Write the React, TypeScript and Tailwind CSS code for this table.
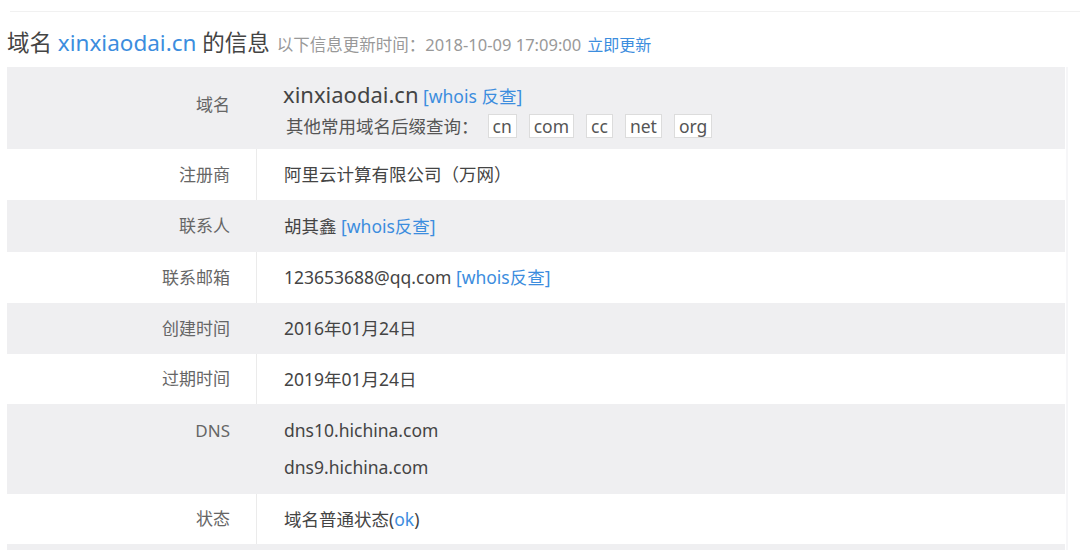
const font = { fontFamily: '"Noto Sans", "Noto Sans CJK SC", sans-serif' };

const suffixes = ['cn', 'com', 'cc', 'net', 'org'];

function Row({
  label,
  gray,
  children,
  top,
}: {
  label: string;
  gray?: boolean;
  children: React.ReactNode;
  top?: boolean;
}) {
  return (
    <div className={`flex ${gray ? 'bg-[#efeff1]' : 'bg-white'}`}>
      <div
        className={`w-[249px] shrink-0 text-right pr-[26px] text-[17px] text-[#666] flex justify-end ${
          top ? 'items-start pt-[8px] leading-[37px]' : 'items-center'
        }`}
      >
        {label}
      </div>
      <div
        className={`flex-1 pl-[27px] border-l ${
          gray ? 'border-[#efeff1]' : 'border-[#ebebeb]'
        }`}
      >
        {children}
      </div>
    </div>
  );
}

export default function App() {
  return (
    <div className="w-[1080px] h-[550px] bg-white overflow-hidden" style={font}>
      {/* top rule */}
      <div className="h-[12px] ml-[10px] border-b border-[#f1f1f1]" />

      {/* heading */}
      <div className="flex items-baseline pl-[7px] pt-[16px] h-[55px]">
        <span className="text-[22.5px] leading-[30px] text-[#444]">
          域名 <span className="text-[#3c8dde]">xinxiaodai.cn</span> 的信息
        </span>
        <span className="ml-[7px] text-[16.5px] text-[#999]">
          以下信息更新时间：2018-10-09 17:09:00
        </span>
        <span className="ml-[6px] text-[16px] text-[#3c8dde]">立即更新</span>
      </div>

      {/* info table */}
      <div className="flex">
        <div className="ml-[7px] w-[1058px] text-[17.5px] text-[#444]">
          <div className="flex bg-[#efeff1] h-[82px]">
            <div className="w-[249px] shrink-0 pr-[26px] pt-[25px] text-right text-[17px] text-[#666]">
              域名
            </div>
            <div className="flex-1 pl-[27px] pt-[12px]">
              <div className="leading-[30px]">
                <span className="text-[22px] text-[#444]">xinxiaodai.cn</span>{' '}
                <span className="text-[17.5px] text-[#3c8dde]">[whois 反查]</span>
              </div>
              <div className="flex items-center mt-[2px] pl-[3px]">
                <span className="text-[#555]">其他常用域名后缀查询：</span>
                <div className="flex gap-[12px] ml-[9px]">
                  {suffixes.map((s) => (
                    <span
                      key={s}
                      className="bg-white border border-[#dcdcdc] px-[4px] h-[24px] leading-[22px] text-[#555]"
                    >
                      {s}
                    </span>
                  ))}
                </div>
              </div>
            </div>
          </div>

          <Row label="注册商">
            <div className="h-[51px] flex items-center">阿里云计算有限公司（万网）</div>
          </Row>
          <Row label="联系人" gray>
            <div className="h-[52px] flex items-center">
              胡其鑫&nbsp;<span className="text-[#3c8dde]">[whois反查]</span>
            </div>
          </Row>
          <Row label="联系邮箱">
            <div className="h-[51px] flex items-center">
              123653688@qq.com&nbsp;<span className="text-[#3c8dde]">[whois反查]</span>
            </div>
          </Row>
          <Row label="创建时间" gray>
            <div className="h-[51px] flex items-center">2016年01月24日</div>
          </Row>
          <Row label="过期时间">
            <div className="h-[50px] flex items-center">2019年01月24日</div>
          </Row>
          <Row label="DNS" gray top>
            <div className="pt-[8px] pb-[8px] leading-[37px]">
              <div>dns10.hichina.com</div>
              <div>dns9.hichina.com</div>
            </div>
          </Row>
          <Row label="状态">
            <div className="h-[50px] flex items-center">
              域名普通状态(<span className="text-[#3c8dde]">ok</span>)
            </div>
          </Row>
          <Row label="" gray>
            <div className="h-[50px]" />
          </Row>
        </div>
        {/* faint right edge */}
        <div className="ml-[1px] w-[2px] bg-[#f6f6f8]" />
      </div>
    </div>
  );
}
